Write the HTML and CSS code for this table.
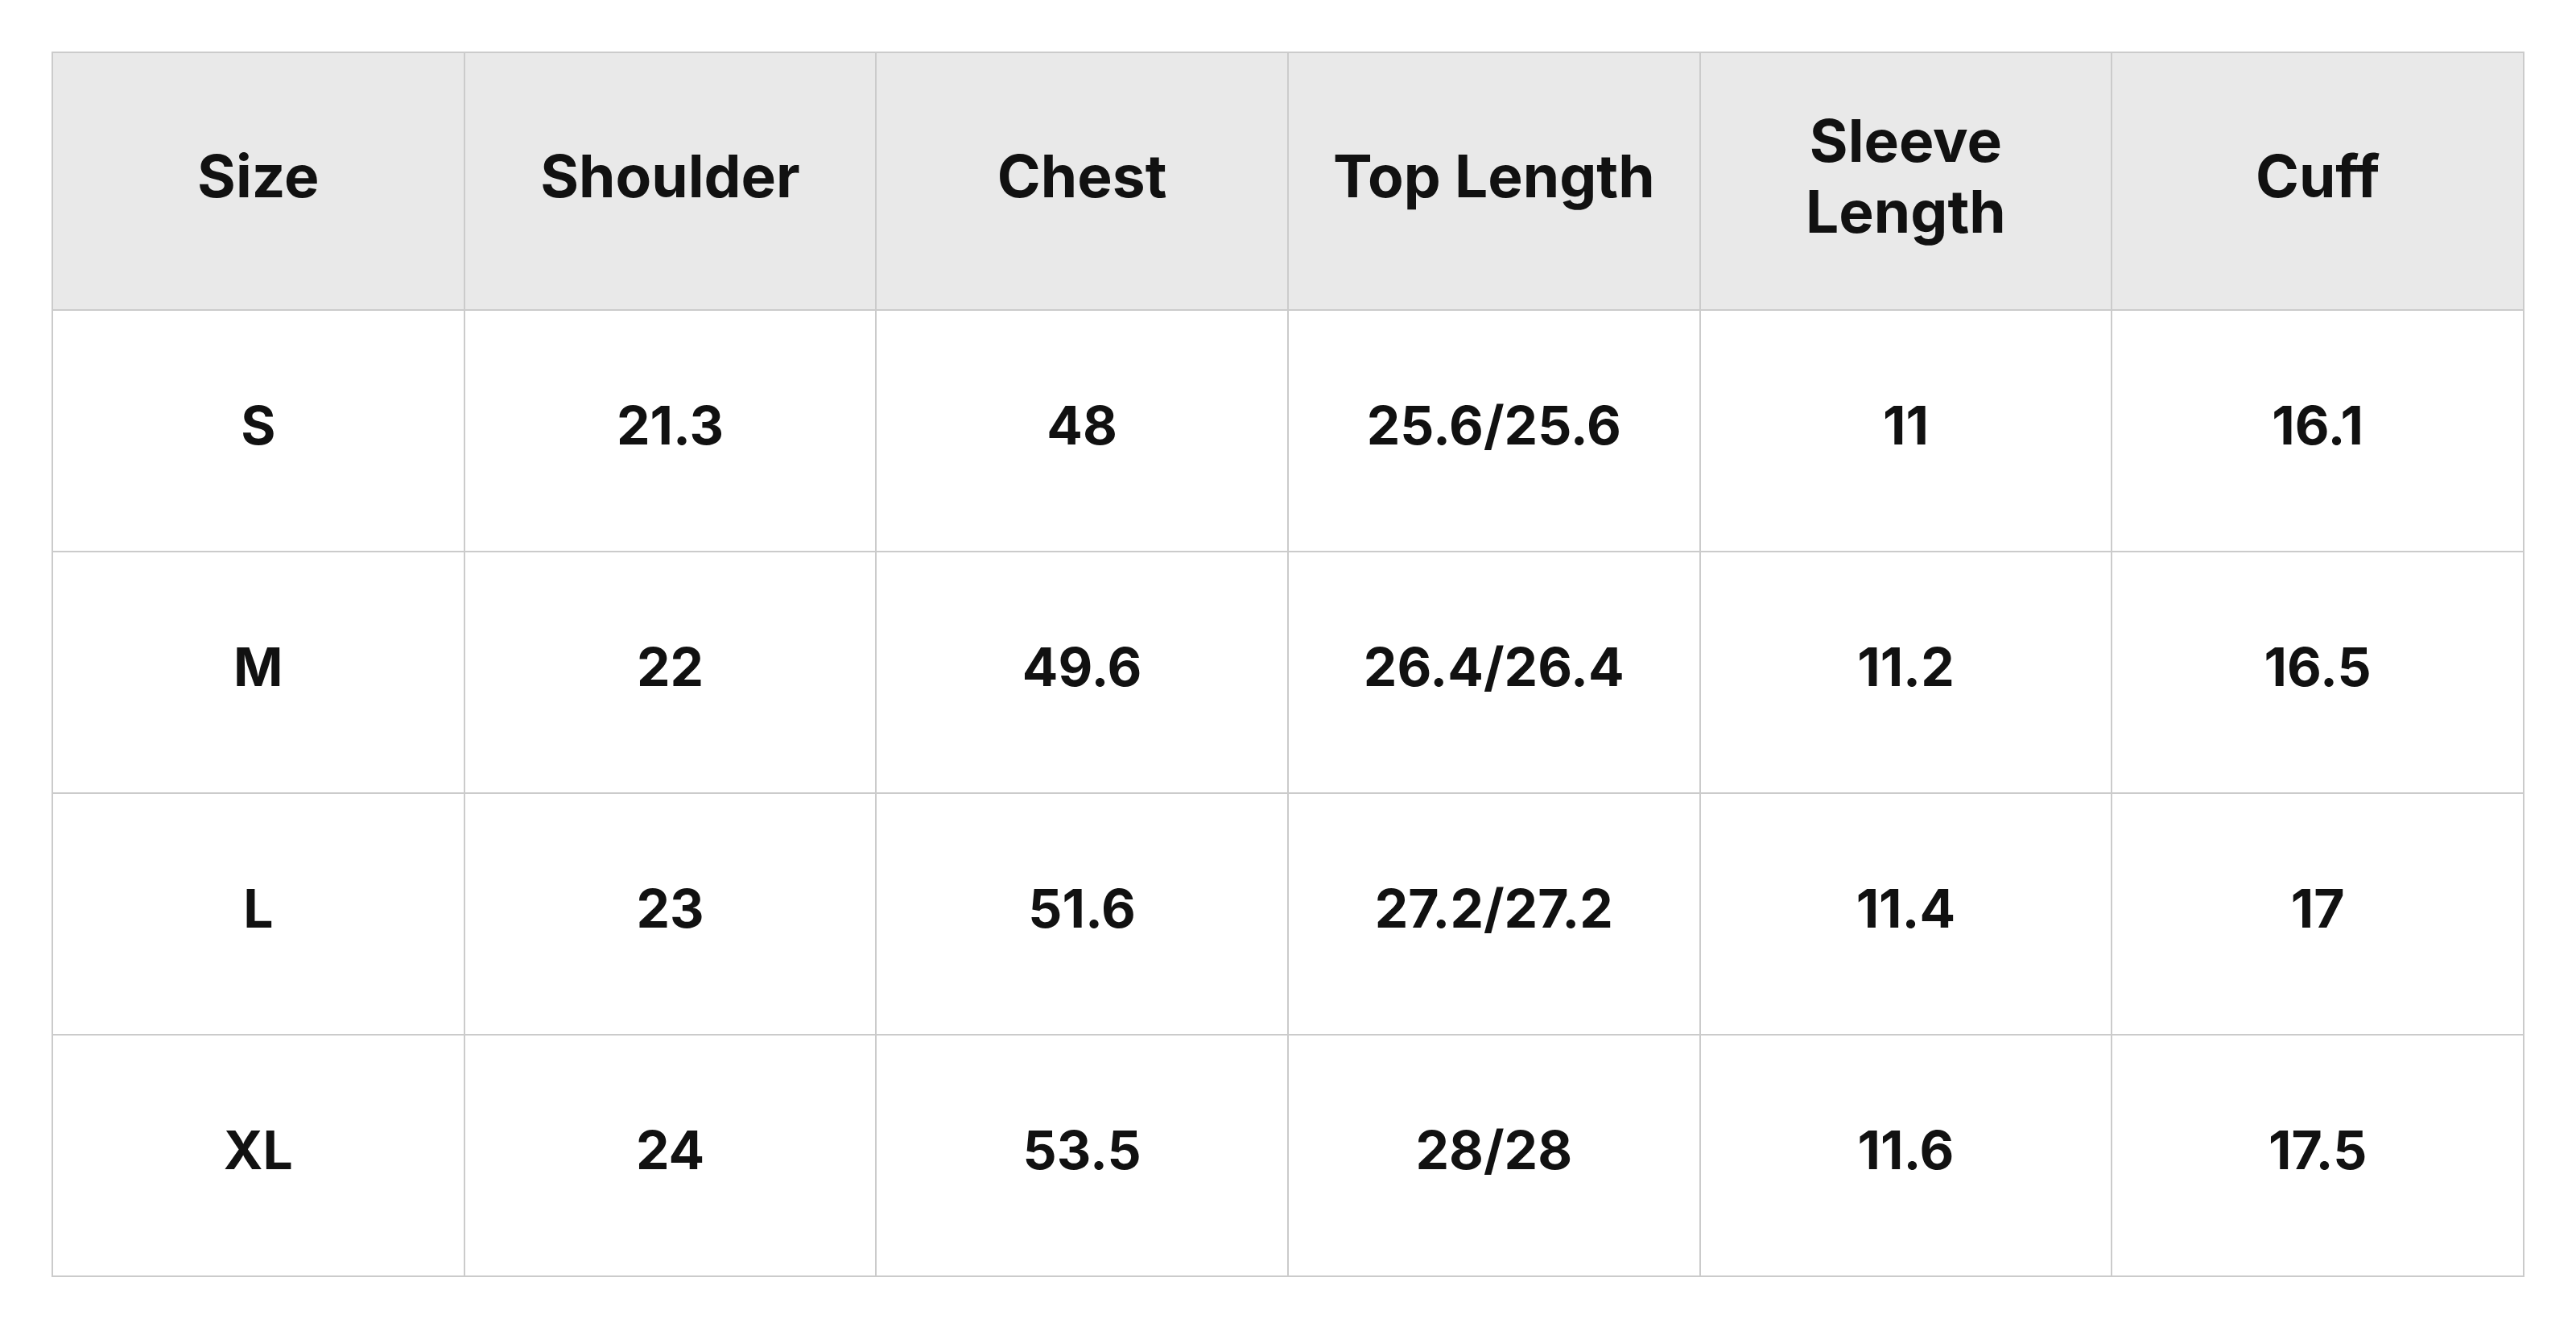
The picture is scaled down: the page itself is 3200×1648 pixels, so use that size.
FILE: index.html
```html
<!DOCTYPE html>
<html lang="en">
<head>
<meta charset="utf-8">
<title>Size Chart</title>
<link rel="stylesheet" href="styles.css">
</head>
<body>
<table class="size-table">
  <colgroup>
    <col class="col"><col class="col"><col class="col"><col class="col"><col class="col"><col class="col">
  </colgroup>
  <thead>
    <tr class="head-row">
      <th>Size</th>
      <th>Shoulder</th>
      <th>Chest</th>
      <th>Top Length</th>
      <th>Sleeve Length</th>
      <th>Cuff</th>
    </tr>
  </thead>
  <tbody>
    <tr class="body-row"><td>S</td><td>21.3</td><td>48</td><td>25.6/25.6</td><td>11</td><td>16.1</td></tr>
    <tr class="body-row"><td>M</td><td>22</td><td>49.6</td><td>26.4/26.4</td><td>11.2</td><td>16.5</td></tr>
    <tr class="body-row"><td>L</td><td>23</td><td>51.6</td><td>27.2/27.2</td><td>11.4</td><td>17</td></tr>
    <tr class="body-row"><td>XL</td><td>24</td><td>53.5</td><td>28/28</td><td>11.6</td><td>17.5</td></tr>
  </tbody>
</table>
</body>
</html>
```

FILE: styles.css
```css
html, body {
  margin: 0;
  padding: 0;
  background: #ffffff;
}

body {
  padding: 64px;
  font-family: Inter, "Noto Sans", "Liberation Sans", sans-serif;
  color: #111111;
}

.size-table {
  width: 100%;
  border-collapse: collapse;
  table-layout: fixed;
}

.col {
  width: 16.6667%;
}

.size-table th,
.size-table td {
  border: 2px solid #cbcbcb;
  text-align: center;
  vertical-align: middle;
  padding: 0 48px 12px;
  font-weight: 700;
  line-height: 1.2;
}

.size-table th {
  background: #e9e9e9;
  font-size: 73px;
}

.size-table td {
  background: #ffffff;
  font-size: 66px;
}

.head-row {
  height: 320px;
}

.body-row {
  height: 300px;
}
```
